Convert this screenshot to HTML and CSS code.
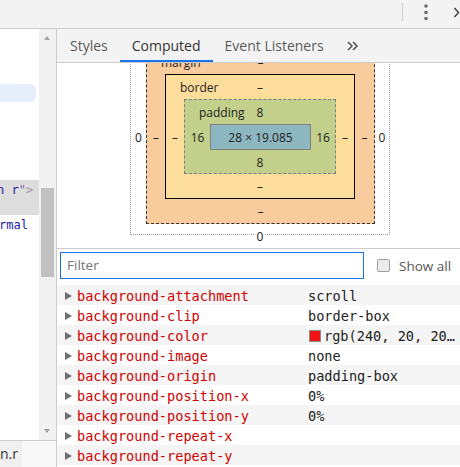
FILE: index.html
```html
<!DOCTYPE html>
<html>
<head>
<meta charset="utf-8">
<link rel="stylesheet" href="styles.css">
</head>
<body>
<div class="topbar">
  <div class="tsep"></div>
  <svg class="dots" width="6" height="22" viewBox="0 0 6 22"><circle cx="3" cy="6" r="1.8"/><circle cx="3" cy="12.5" r="1.8"/><circle cx="3" cy="18.5" r="1.8"/></svg>
  <svg class="chev" width="7" height="22" viewBox="0 0 7 22"><polyline points="1.5,8 5.5,12.5 1.5,17"/></svg>
</div>
<div class="main">
  <div class="leftcol">
    <div class="leftbody">
      <div class="code">
        <div class="pill"></div>
        <div class="selrow"><div class="cline shift3"><span class="av">n r</span><span class="aq">"</span><span class="tg">&gt;</span></div></div>
        <div class="cline shift1"><span class="av">rmal</span></div>
      </div>
      <div class="vscroll">
        <span class="arr up"></span>
        <div class="thumb"></div>
        <span class="arr down"></span>
      </div>
    </div>
    <div class="lefttabs"><div class="ltab">n.r</div></div>
  </div>
  <div class="right">
    <div class="tabs">
      <div class="tab">Styles</div>
      <div class="tab active">Computed</div>
      <div class="tab">Event Listeners</div>
      <svg class="more" width="12" height="12" viewBox="0 0 12 12"><polyline points="1,2 5,6 1,10"/><polyline points="6,2 10,6 6,10"/></svg>
    </div>
    <div class="bmwrap">
      <div class="ring pos">
        <div class="vt">0</div>
        <div class="vl">0</div>
        <div class="ring margin inner">
          <div class="lbl">margin</div>
          <div class="vt">–</div>
          <div class="vl">–</div>
          <div class="ring border inner">
            <div class="lbl">border</div>
            <div class="vt">–</div>
            <div class="vl">–</div>
            <div class="ring padding inner">
              <div class="lbl">padding</div>
              <div class="vt">8</div>
              <div class="vl">16</div>
              <div class="content inner">28 × 19.085</div>
              <div class="vr">16</div>
              <div class="vb">8</div>
            </div>
            <div class="vr">–</div>
            <div class="vb">–</div>
          </div>
          <div class="vr">–</div>
          <div class="vb">–</div>
        </div>
        <div class="vr">0</div>
      </div>
      <div class="bm-zero"><span>0</span></div>
    </div>
    <div class="filterrow">
      <div class="filter">Filter</div>
      <span class="cb"></span>
      <span class="showall">Show all</span>
    </div>
    <div class="props">
      <div class="prow"><span class="tri"></span><span class="pn">background-attachment</span><span class="pv">scroll</span></div>
      <div class="prow"><span class="tri"></span><span class="pn">background-clip</span><span class="pv">border-box</span></div>
      <div class="prow"><span class="tri"></span><span class="pn">background-color</span><span class="pv"><span class="sw"></span>rgb(240, 20, 20…</span></div>
      <div class="prow"><span class="tri"></span><span class="pn">background-image</span><span class="pv">none</span></div>
      <div class="prow"><span class="tri"></span><span class="pn">background-origin</span><span class="pv">padding-box</span></div>
      <div class="prow"><span class="tri"></span><span class="pn">background-position-x</span><span class="pv">0%</span></div>
      <div class="prow"><span class="tri"></span><span class="pn">background-position-y</span><span class="pv">0%</span></div>
      <div class="prow"><span class="tri"></span><span class="pn">background-repeat-x</span><span class="pv"></span></div>
      <div class="prow"><span class="tri"></span><span class="pn">background-repeat-y</span><span class="pv"></span></div>
      <div class="prow"><span class="tri"></span><span class="pn">background-size</span><span class="pv">auto</span></div>
    </div>
  </div>
</div>
</body>
</html>
```
FILE: styles.css
```css
html, body {
  margin: 0;
  padding: 0;
}
body {
  width: 460px;
  height: 467px;
  overflow: hidden;
  background: #fff;
  font-family: "Open Sans", "Noto Sans", sans-serif;
  color: #333;
}

/* top bar */
.topbar {
  height: 28px;
  background: #f3f3f3;
  border-bottom: 1px solid #cccccc;
  display: flex;
  justify-content: flex-end;
  align-items: flex-start;
}
.tsep {
  width: 1px;
  height: 18px;
  margin-top: 3px;
  background: #cfcfcf;
}
.dots {
  margin-left: 20px;
  fill: #6b6b6b;
}
.chev {
  margin-left: 24px;
  fill: none;
  stroke: #444;
  stroke-width: 1.5;
}

.main {
  display: flex;
  height: 438px;
}

/* left column */
.leftcol {
  width: 56px;
  border-right: 1px solid #cccccc;
  display: flex;
  flex-direction: column;
}
.leftbody {
  height: 411px;
  display: flex;
}
.code {
  width: 39px;
  overflow: hidden;
  background: #fff;
  font-family: "DejaVu Sans Mono", monospace;
  font-size: 12px;
}
.pill {
  margin-top: 55px;
  width: 36px;
  height: 18px;
  background: #e5eefa;
  border-radius: 0 6px 6px 0;
}
.selrow {
  margin-top: 78px;
  height: 35px;
  background: #dddddd;
}
.cline {
  height: 20px;
  line-height: 20px;
  white-space: pre;
}
.shift3 { margin-left: -3px; }
.shift1 { margin-left: -1px; }
.av { color: #1a1aa6; }
.aq { color: #8b6aa8; }
.tg { color: #a894a6; }

.vscroll {
  width: 17px;
  background: #f1f1f1;
  display: flex;
  flex-direction: column;
}
.arr {
  width: 0;
  height: 0;
  margin-left: 5px;
  border-left: 3.5px solid transparent;
  border-right: 3.5px solid transparent;
}
.arr.up {
  margin-top: 7px;
  border-bottom: 4px solid #a3a3a3;
}
.arr.down {
  margin-top: auto;
  margin-bottom: 7px;
  border-top: 4px solid #a3a3a3;
}
.thumb {
  margin-top: 148px;
  margin-left: 2px;
  width: 13px;
  height: 89px;
  background: #c1c1c1;
}
.lefttabs {
  flex: 1;
  border-top: 1px solid #cccccc;
  background: #f8f8f8;
  display: flex;
}
.ltab {
  width: 22px;
  background: #f0f0f0;
  font-size: 14px;
  line-height: 26px;
  color: #333;
  white-space: pre;
  overflow: hidden;
}

/* right panel */
.right {
  width: 403px;
  overflow: hidden;
  display: flex;
  flex-direction: column;
}
.tabs {
  height: 33px;
  flex: none;
  background: #f3f3f3;
  border-bottom: 1px solid #cccccc;
  display: flex;
  align-items: stretch;
  padding-left: 1px;
}
.tab {
  padding: 0 12px;
  font-size: 14px;
  color: #5a5a5a;
  display: flex;
  align-items: center;
  box-sizing: border-box;
  border-bottom: 2px solid transparent;
  padding-top: 2px;
  white-space: nowrap;
}
.tab.active {
  color: #333;
  border-bottom-color: #1a73e8;
}
.more {
  align-self: center;
  margin-left: 11px;
  fill: none;
  stroke: #555;
  stroke-width: 1.6;
}

/* box model */
.bmwrap {
  height: 185px;
  flex: none;
  overflow: hidden;
  border-bottom: 1px solid #cccccc;
  font-size: 12px;
  line-height: 16px;
  color: #222;
}
.ring {
  display: grid;
  box-sizing: border-box;
}
.ring > .lbl,
.ring > .vt,
.ring > .vl,
.ring > .vr,
.ring > .vb {
  padding-top: 2px;
}
.ring > .lbl {
  grid-row: 1;
  grid-column: 1 / -1;
  justify-self: start;
  align-self: center;
  padding-left: 14px;
}
.ring > .vt {
  grid-row: 1;
  grid-column: 1 / -1;
  justify-self: center;
  align-self: center;
}
.ring > .vl {
  grid-row: 2;
  grid-column: 1;
  justify-self: center;
  align-self: center;
}
.ring > .inner {
  grid-row: 2;
  grid-column: 2;
}
.ring > .vr {
  grid-row: 2;
  grid-column: 3;
  justify-self: center;
  align-self: center;
}
.ring > .vb {
  grid-row: 3;
  grid-column: 1 / -1;
  justify-self: center;
  align-self: center;
}
.pos {
  width: 260px;
  margin: -25px 0 0 73px;
  border: 1px dotted #9a9a9a;
  grid-template-columns: 15px 229px 14px;
  grid-template-rows: 10px auto 10px;
}
.margin {
  background: #f9cc9d;
  border: 1px dashed #333;
  grid-template-columns: 18px 190px 19px;
  grid-template-rows: 24px auto 24px;
}
.border {
  background: #fddd9b;
  border: 1px solid #000;
  grid-template-columns: 18px 152px 18px;
  grid-template-rows: 24px auto 24px;
}
.padding {
  background: #c3d08b;
  border: 1px dashed #808080;
  grid-template-columns: 25px 101px 24px;
  grid-template-rows: 24px auto 23px;
}
.content {
  height: 26px;
  box-sizing: border-box;
  background: #8cb6c0;
  border: 1px solid #808080;
  display: flex;
  align-items: center;
  justify-content: center;
  padding-top: 2px;
  white-space: nowrap;
}
.bm-zero {
  width: 260px;
  margin: -5px 0 0 73px;
  text-align: center;
  line-height: 14px;
}
.bm-zero span {
  background: #fff;
  padding: 0 2px;
}

/* filter */
.filterrow {
  flex: none;
  display: flex;
  align-items: center;
  padding: 3px 0 6px 3px;
}
.filter {
  width: 304px;
  height: 27px;
  box-sizing: border-box;
  border: 1px solid #1a73e8;
  font-size: 13.5px;
  line-height: 25px;
  padding-left: 6px;
  color: #757575;
}
.cb {
  width: 13px;
  height: 13px;
  box-sizing: border-box;
  margin-left: 13px;
  border: 1px solid #a0a0a0;
  border-radius: 2px;
  background: #ececec;
}
.showall {
  margin-left: 9px;
  font-size: 13.5px;
  color: #555;
  white-space: nowrap;
}

/* properties */
.props {
  font-family: "DejaVu Sans Mono", monospace;
  font-size: 13.6px;
}
.prow {
  height: 20px;
  box-sizing: border-box;
  padding-top: 1px;
  display: flex;
  align-items: center;
  white-space: nowrap;
}
.prow:nth-child(odd) {
  background: #f5f5f5;
}
.tri {
  width: 0;
  height: 0;
  margin-left: 8px;
  border-left: 7px solid #6e6e6e;
  border-top: 4px solid transparent;
  border-bottom: 4px solid transparent;
}
.pn {
  margin-left: 5px;
  width: 231px;
  flex: none;
  color: #d10000;
}
.pv {
  color: #222;
  display: flex;
  align-items: center;
}
.sw {
  width: 12px;
  height: 12px;
  box-sizing: border-box;
  border: 1px solid #8a8a8a;
  background: rgb(240, 20, 20);
  margin-right: 3px;
  margin-left: 1px;
}
```
